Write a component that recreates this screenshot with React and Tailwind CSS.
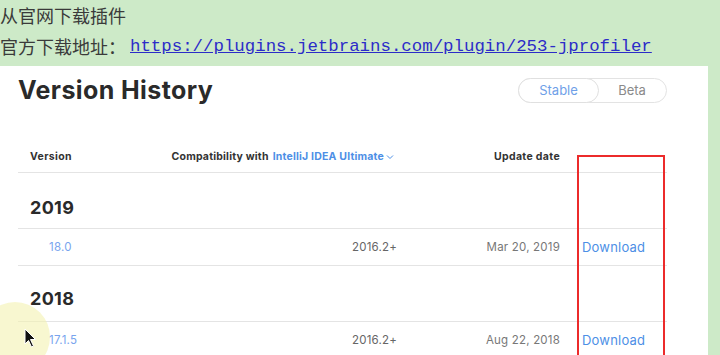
import React from "react";

const sans = { fontFamily: "Inter, 'Open Sans', sans-serif" };

function Row({ version, compat, date }) {
  return (
    <div className="flex h-[37px] items-center border-b border-[#e4e4e4] pt-[2px] text-[11.5px] tracking-[0.2px]">
      <div className="w-[154px] shrink-0 pl-[31px] text-[#79a4ee]">{version}</div>
      <div className="w-[225px] shrink-0 text-right text-[#666]">{compat}</div>
      <div className="w-[163px] shrink-0 text-right text-[#777]">{date}</div>
      <div className="pl-[22px] text-[13px] text-[#4d8fe6]">Download</div>
    </div>
  );
}

function Year({ year, pt }) {
  return (
    <div className={`h-[56px] border-b border-[#e4e4e4] pl-[12px] ${pt}`}>
      <div className="text-[18px] font-bold leading-[22px] tracking-[0.3px] text-[#2a2a2a]">{year}</div>
    </div>
  );
}

export default function App() {
  return (
    <div className="relative h-[355px] w-[720px] overflow-hidden bg-[#cdeac8]">
      <div
        className="h-[66px] text-[18px] text-[#3a3a3a]"
        style={{ fontFamily: "'Noto Sans CJK SC', sans-serif" }}
      >
        <div className="h-[31px] leading-[31px]">从官网下载插件</div>
        <div className="flex h-[31px] items-center leading-[31px]">
          <span>官方下载地址：</span>
          <span
            className="ml-[4px] text-[17.4px] text-[#2c2cc8] underline"
            style={{ fontFamily: "'Liberation Mono', monospace" }}
          >
            https://plugins.jetbrains.com/plugin/253-jprofiler
          </span>
        </div>
      </div>
      <div className="h-[289px] w-[708px] bg-white pl-[18px] pr-[41px]" style={sans}>
        <div className="flex items-center justify-between pt-[12px]">
          <div className="text-[25px] font-bold leading-[25px] tracking-[0.4px] text-[#2a2a2a]">
            Version History
          </div>
          <div className="flex h-[25px] w-[149px] rounded-full border border-[#e3e3e3] text-[13px]">
            <div className="flex w-[81px] items-center justify-center rounded-full border border-[#e0e0e0] bg-white text-[#6f9fe8] -m-px">
              Stable
            </div>
            <div className="flex flex-1 items-center justify-center text-[#8a8a8a]">Beta</div>
          </div>
        </div>
        <div className="mt-[38px] flex h-[32px] items-center whitespace-nowrap border-b border-[#e4e4e4] text-[10.5px] font-bold tracking-[0.2px] text-[#333]">
          <div className="w-[154px] shrink-0 pl-[12px] tracking-[0.35px]">Version</div>
          <div className="flex w-[225px] shrink-0 items-center justify-end pr-[3px]">
            <span>Compatibility with</span>
            <span className="ml-[4px] text-[#4d8fe6]">IntelliJ IDEA Ultimate</span>
            <svg width="8" height="6" viewBox="0 0 8 6" className="ml-[2px] shrink-0">
              <path d="M1 1.5 L4 4.5 L7 1.5" fill="none" stroke="#4d8fe6" strokeWidth="1" />
            </svg>
          </div>
          <div className="w-[163px] shrink-0 text-right tracking-[0.35px]">Update date</div>
        </div>
        <Year year="2019" pt="pt-[24px]" />
        <Row version="18.0" compat="2016.2+" date="Mar 20, 2019" />
        <Year year="2018" pt="pt-[22px]" />
        <Row version="17.1.5" compat="2016.2+" date="Aug 22, 2018" />
      </div>
      <div className="absolute left-[577px] top-[155px] h-[220px] w-[88px] border-2 border-[#ec2b2b]" />
      <div className="absolute left-[-20px] top-[302px] h-[70px] w-[70px] rounded-full bg-[#f4f2b0] opacity-60" />
      <svg className="absolute left-[24px] top-[328px]" width="14" height="20" viewBox="0 0 14 20">
        <path d="M1 1 L1 16 L4.5 12.5 L7.5 19 L9.5 18 L6.5 11.5 L11.5 11.5 Z" fill="#111" stroke="#fff" strokeWidth="1" />
      </svg>
    </div>
  );
}
